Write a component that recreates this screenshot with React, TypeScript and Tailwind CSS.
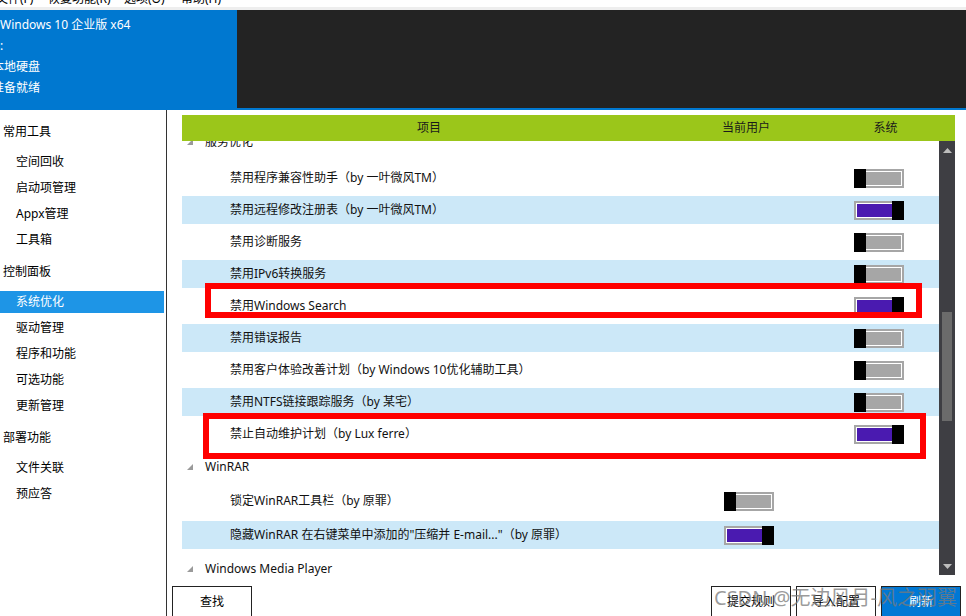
import React from "react";

function Toggle({ on }: { on: boolean }) {
  return (
    <div className="relative h-[19px] w-[50px] bg-[#a6a6a6] p-[2px]">
      <div
        className={
          on
            ? "h-full w-full border border-white bg-[#4a1ab0]"
            : "h-full w-full border border-white bg-[#a6a6a6]"
        }
      />
      <div
        className={
          on
            ? "absolute right-0 top-0 h-full w-[12px] bg-black"
            : "absolute left-0 top-0 h-full w-[12px] bg-black"
        }
      />
    </div>
  );
}

function Tri() {
  return (
    <svg width="6" height="6" viewBox="0 0 6 6" className="shrink-0">
      <polygon points="6,0 6,6 0,6" fill="#9a9a9a" />
    </svg>
  );
}

type RowProps = {
  text: string;
  blue?: boolean;
  user?: boolean;
  sys?: boolean;
  tall?: boolean;
};

function Row({ text, blue, user, sys, tall }: RowProps) {
  return (
    <div className={tall ? "flex h-[34px] items-center" : "flex h-[32px] items-center"}>
      <div className={blue ? "flex h-[28px] w-full items-center bg-[#cce8f8]" : "flex h-[28px] w-full items-center"}>
        <div className="w-[494px] whitespace-nowrap pl-[48px] text-[12px] text-[#111]">{text}</div>
        <div className="flex w-[140px] pl-[48px]">{user !== undefined && <Toggle on={user} />}</div>
        <div className="flex w-[123px] pl-[38px]">{sys !== undefined && <Toggle on={sys} />}</div>
      </div>
    </div>
  );
}

function Group({ text, first }: { text: string; first?: boolean }) {
  return (
    <div className={first ? "flex h-[34px] items-center gap-[12px] pb-[6px] pl-[5px]" : "flex h-[34px] items-center gap-[12px] pl-[5px]"}>
      <Tri />
      <span className="whitespace-nowrap text-[12px] text-[#111]">{text}</span>
    </div>
  );
}

function Cat({ text }: { text: string }) {
  return (
    <div className="flex h-[36px] items-start pb-[4px] pl-[3px] pt-[6px]">
      <span className="leading-[26px]">{text}</span>
    </div>
  );
}

function Item({ text, sel }: { text: string; sel?: boolean }) {
  return (
    <div className="flex h-[26px] items-center">
      <div className={sel ? "flex h-[22px] w-[164px] items-center bg-[#1e95e6] pl-[16px] text-white" : "flex h-[22px] w-[164px] items-center pl-[16px]"}>
        {text}
      </div>
    </div>
  );
}

function Btn({ text, primary }: { text: string; primary?: boolean }) {
  return (
    <div
      className={
        primary
          ? "flex h-[32px] w-[80px] items-center justify-center border border-[#222] bg-[#0078d4] text-[12px] text-white"
          : "flex h-[32px] w-[80px] items-center justify-center border border-[#222] bg-white text-[12px] text-black"
      }
    >
      {text}
    </div>
  );
}

export default function App() {
  return (
    <div className="relative h-[616px] w-[966px] overflow-hidden bg-white font-['Noto_Sans','Noto_Sans_CJK_SC',sans-serif] text-black">
      {/* menu bar */}
      <div className="h-[10px] overflow-hidden border-b-[3px] border-[#eeeeee] bg-white">
        <div className="-mt-[8px] flex text-[12px] leading-[14px]">
          <span className="-ml-[4px] w-[52px]">文件(F)</span>
          <span className="w-[76px]">恢复功能(R)</span>
          <span className="w-[57px]">选项(O)</span>
          <span>帮助(H)</span>
        </div>
      </div>

      {/* header */}
      <div className="flex h-[100px] border-b-2 border-[#0078d0]">
        <div className="w-[237px] bg-[#0078d0] pt-[4px] text-[12px] leading-[21px] text-white">
          <div className="whitespace-nowrap">Windows 10 企业版 x64</div>
          <div>:</div>
          <div className="-ml-[8px] whitespace-nowrap">本地硬盘</div>
          <div className="-ml-[8px] whitespace-nowrap">准备就绪</div>
        </div>
        <div className="flex-1 bg-[#232323]" />
      </div>

      {/* body */}
      <div className="flex h-[506px]">
        {/* sidebar */}
        <div className="w-[167px] shrink-0 border-r border-[#333] pt-[3px] text-[12px]">
          <Cat text="常用工具" />
          <Item text="空间回收" />
          <Item text="启动项管理" />
          <Item text="Appx管理" />
          <Item text="工具箱" />
          <Cat text="控制面板" />
          <Item text="系统优化" sel />
          <Item text="驱动管理" />
          <Item text="程序和功能" />
          <Item text="可选功能" />
          <Item text="更新管理" />
          <Cat text="部署功能" />
          <Item text="文件关联" />
          <Item text="预应答" />
        </div>

        {/* main */}
        <div className="flex flex-1 flex-col">
          <div className="pl-[15px] pt-[5px]">
            <div className="flex h-[26px] w-[773px] items-center bg-[#9bc61a] text-[12px] text-[#1a1a1a]">
              <div className="w-[494px] text-center">项目</div>
              <div className="w-[140px] text-center">当前用户</div>
              <div className="w-[139px] text-center">系统</div>
            </div>
            <div className="flex h-[445px]">
              <div className="w-[757px] overflow-hidden">
                <div className="-mt-[13px]">
                  <Group text="服务优化" first />
                  <Row text="禁用程序兼容性助手（by 一叶微风TM）" sys={false} />
                  <Row text="禁用远程修改注册表（by 一叶微风TM）" blue sys={true} />
                  <Row text="禁用诊断服务" sys={false} />
                  <Row text="禁用IPv6转换服务" blue sys={false} />
                  <Row text="禁用Windows Search" sys={true} />
                  <Row text="禁用错误报告" blue sys={false} />
                  <Row text="禁用客户体验改善计划（by Windows 10优化辅助工具）" sys={false} />
                  <Row text="禁用NTFS链接跟踪服务（by 某宅）" blue sys={false} />
                  <Row text="禁止自动维护计划（by Lux ferre）" sys={true} />
                  <Group text="WinRAR" />
                  <Row text="锁定WinRAR工具栏（by 原罪）" user={false} tall />
                  <Row text={'隐藏WinRAR 在右键菜单中添加的"压缩并 E-mail..."（by 原罪）'} blue user={true} tall />
                  <Group text="Windows Media Player" />
                </div>
              </div>
              {/* scrollbar */}
              <div className="flex h-[434px] w-[16px] flex-col items-center bg-[#3e3e43] pt-[7px]">
                <svg width="9" height="5" viewBox="0 0 9 5">
                  <polygon points="4.5,0 9,5 0,5" fill="#bdbdbd" />
                </svg>
                <div className="mt-[159px] h-[109px] w-[10px] bg-[#6b6b6b]" />
                <div className="flex-1" />
                <svg width="9" height="5" viewBox="0 0 9 5" className="mb-[6px]">
                  <polygon points="0,0 9,0 4.5,5" fill="#bdbdbd" />
                </svg>
              </div>
            </div>
          </div>
          {/* bottom buttons */}
          <div className="flex justify-between px-[5px]">
            <Btn text="查找" />
            <div className="flex gap-[5px]">
              <Btn text="提交规则" />
              <Btn text="导入配置" />
              <Btn text="刷新" primary />
            </div>
          </div>
        </div>
      </div>

      {/* red annotation boxes */}
      <div className="absolute left-[205px] top-[283px] h-[35px] w-[717px] border-[6px] border-[#ff0000]" />
      <div className="absolute left-[203px] top-[413px] h-[46px] w-[723px] border-[6px] border-[#ff0000]" />

      {/* watermark */}
      <div className="absolute left-[714px] top-[584px] whitespace-nowrap text-[20px] leading-[28px] text-[#7a7a7a]/75">
        CSDN @无边风月-风之羽翼
      </div>
    </div>
  );
}
